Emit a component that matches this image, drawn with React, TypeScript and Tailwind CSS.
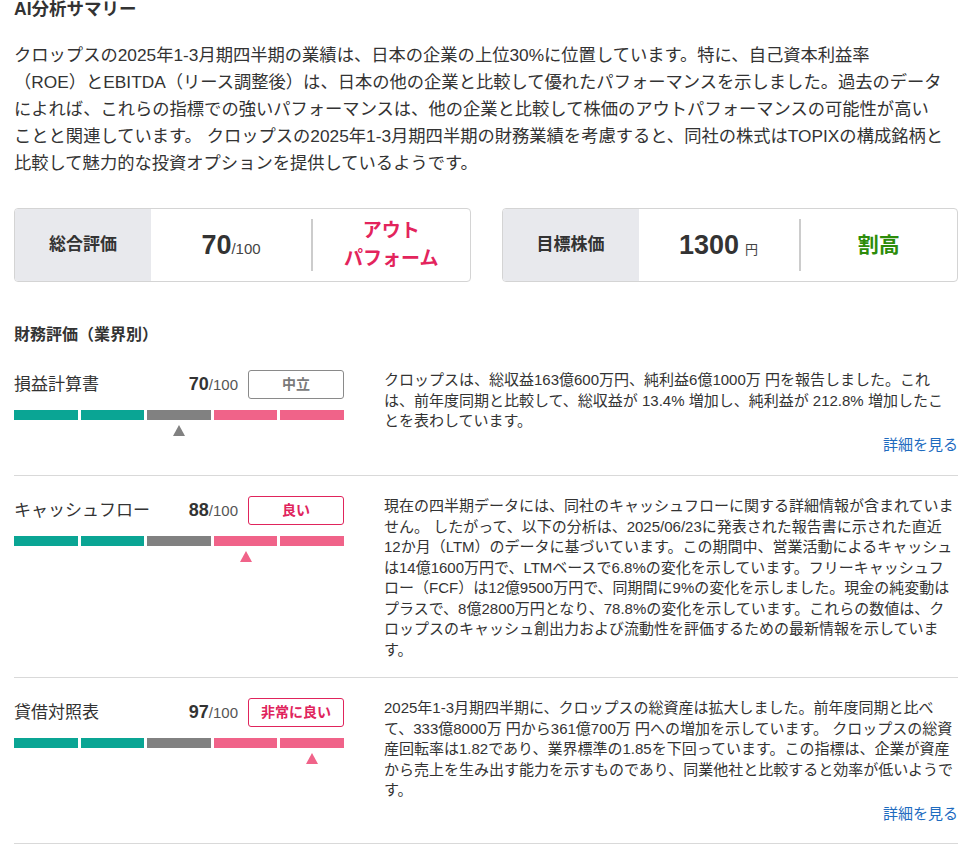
import React from 'react';

const FONT = { fontFamily: '"Liberation Sans", "Noto Sans CJK JP", sans-serif' };

type Row = {
  label: string;
  score: number;
  badge: string;
  tone: 'neutral' | 'good';
  active: number;
  text: React.ReactNode;
  link?: boolean;
  pb: string;
};

const rows: Row[] = [
  {
    label: '損益計算書',
    score: 70,
    badge: '中立',
    tone: 'neutral',
    active: 2,
    text: (
      <>
        クロップスは、総収益163億600万円、純利益6億1000万 円を報告しました。これは、前年度同期と比較して、総収益が 13.4% 増加し、純利益が 212.8% 増加したこ
        <br />
        とを表わしています。
      </>
    ),
    link: true,
    pb: 'pb-[20px]',
  },
  {
    label: 'キャッシュフロー',
    score: 88,
    badge: '良い',
    tone: 'good',
    active: 3,
    text:
      '現在の四半期データには、同社のキャッシュフローに関する詳細情報が含まれていません。 したがって、以下の分析は、2025/06/23に発表された報告書に示された直近12か月（LTM）のデータに基づいています。この期間中、営業活動によるキャッシュは14億1600万円で、LTMベースで6.8%の変化を示しています。フリーキャッシュフロー（FCF）は12億9500万円で、同期間に9%の変化を示しました。現金の純変動はプラスで、8億2800万円となり、78.8%の変化を示しています。これらの数値は、クロップスのキャッシュ創出力および流動性を評価するための最新情報を示しています。',
    pb: 'pb-[17px]',
  },
  {
    label: '貸借対照表',
    score: 97,
    badge: '非常に良い',
    tone: 'good',
    active: 4,
    text:
      '2025年1-3月期四半期に、クロップスの総資産は拡大しました。前年度同期と比べて、333億8000万 円から361億700万 円への増加を示しています。 クロップスの総資産回転率は1.82であり、業界標準の1.85を下回っています。この指標は、企業が資産から売上を生み出す能力を示すものであり、同業他社と比較すると効率が低いようです。',
    link: true,
    pb: 'pb-[19px]',
  },
];

const segColors = ['bg-[#0aa594]', 'bg-[#0aa594]', 'bg-[#818181]', 'bg-[#f06389]', 'bg-[#f06389]'];

function ScoreBar({ active, tone }: { active: number; tone: Row['tone'] }) {
  return (
    <div className="mt-[11px] flex gap-[3px]">
      {segColors.map((c, i) => (
        <div key={i} className="flex flex-1 flex-col items-center">
          <div className={`h-[10px] w-full ${c}`} />
          {i === active && (
            <div
              className={`mt-[5px] h-0 w-0 border-x-[6.5px] border-b-[11px] border-x-transparent ${
                tone === 'neutral' ? 'border-b-[#818181]' : 'border-b-[#f06389]'
              }`}
            />
          )}
        </div>
      ))}
    </div>
  );
}

function RatingRow({ row, first }: { row: Row; first?: boolean }) {
  return (
    <div
      className={`grid grid-cols-[330px_1fr] gap-[40px] ${row.pb} ${
        first ? 'mt-[26px]' : 'border-t border-[#d9d9d9] pt-[20px]'
      }`}
    >
      <div>
        <div className="flex h-[29px] items-center">
          <div className="flex-1 text-[17px] text-[#333]">{row.label}</div>
          <div className="text-[#333]">
            <span className="text-[18px] font-bold">{row.score}</span>
            <span className="text-[15px] text-[#555]">/100</span>
          </div>
          <div
            className={`ml-[10px] flex h-[29px] w-[96px] items-center justify-center rounded-[3px] border text-[14px] font-bold ${
              row.tone === 'neutral'
                ? 'border-[#8a8a8a] text-[#7a7a7a]'
                : 'border-[#e0245c] text-[#e0245c]'
            }`}
          >
            {row.badge}
          </div>
        </div>
        <ScoreBar active={row.active} tone={row.tone} />
      </div>
      <div className="text-[15px] leading-[20.5px] text-[#333]">
        <p>{row.text}</p>
        {row.link && (
          <div className="mt-[3px] text-right">
            <a className="text-[#1e6bbf]">詳細を見る</a>
          </div>
        )}
      </div>
    </div>
  );
}

function SummaryCard({
  label,
  value,
  right,
}: {
  label: string;
  value: React.ReactNode;
  right: React.ReactNode;
}) {
  return (
    <div className="flex h-[74px] overflow-hidden rounded-[4px] border border-[#d4d4d4]">
      <div className="flex w-[136px] items-center justify-center bg-[#e8e9ed] text-[17px] font-bold text-[#333]">
        {label}
      </div>
      <div className="flex w-[160px] items-center justify-center text-[#333]">{value}</div>
      <div className="my-[10px] w-[2px] bg-[#cccccc]" />
      <div className="flex flex-1 items-center justify-center text-center">{right}</div>
    </div>
  );
}

export default function App() {
  return (
    <div className="min-h-[845px] w-[972px] bg-white px-[14px] text-[#333]" style={FONT}>
      <h2 className="text-[17.5px] font-bold leading-[18px]">AI分析サマリー</h2>
      <p className="mt-[24px] text-[17.3px] leading-[27px]">
        クロップスの2025年1-3月期四半期の業績は、日本の企業の上位30%に位置しています。特に、自己資本利益率
        <br />
        （ROE）とEBITDA（リース調整後）は、日本の他の企業と比較して優れたパフォーマンスを示しました。過去のデータ
        <br />
        によれば、これらの指標での強いパフォーマンスは、他の企業と比較して株価のアウトパフォーマンスの可能性が高い
        <br />
        ことと関連しています。 クロップスの2025年1-3月期四半期の財務業績を考慮すると、同社の株式はTOPIXの構成銘柄と
        <br />
        比較して魅力的な投資オプションを提供しているようです。
      </p>

      <div className="mt-[31px] grid grid-cols-2 gap-[31px]">
        <SummaryCard
          label="総合評価"
          value={
            <span>
              <span className="text-[27px] font-bold">70</span>
              <span className="text-[15px] text-[#444]">/100</span>
            </span>
          }
          right={
            <span className="text-[19px] font-bold leading-[28px] text-[#e3245c]">
              アウト
              <br />
              パフォーム
            </span>
          }
        />
        <SummaryCard
          label="目標株価"
          value={
            <span>
              <span className="text-[27px] font-bold">1300</span>
              <span className="ml-[6px] text-[13px] text-[#444]">円</span>
            </span>
          }
          right={<span className="text-[21px] font-bold text-[#2d8c0a]">割高</span>}
        />
      </div>

      <h3 className="mt-[44px] text-[16px] font-bold leading-[18px]">財務評価（業界別）</h3>

      {rows.map((r, i) => (
        <RatingRow key={r.label} row={r} first={i === 0} />
      ))}
      <div className="border-t border-[#d9d9d9]" />
    </div>
  );
}
